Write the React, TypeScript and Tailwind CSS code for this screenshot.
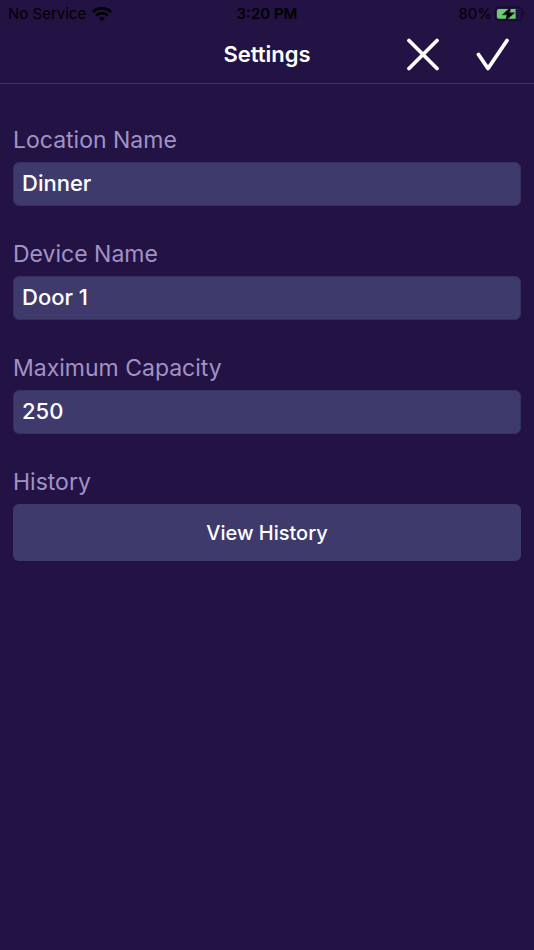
import { useState } from "react";

interface FieldProps {
  id: string;
  label: string;
  defaultValue: string;
  inputMode?: "text" | "numeric";
}

const fields: FieldProps[] = [
  { id: "location-name", label: "Location Name", defaultValue: "Dinner" },
  { id: "device-name", label: "Device Name", defaultValue: "Door 1" },
  { id: "max-capacity", label: "Maximum Capacity", defaultValue: "250", inputMode: "numeric" },
];

function WifiIcon() {
  return (
    <svg viewBox="0 0 20 15" className="h-[15px] w-5" fill="none" stroke="black" aria-hidden="true">
      <path d="M1 4.9C6 0.1 14 0.1 19 4.9" strokeWidth="2.9" />
      <path d="M4.2 8.5C7.4 5.4 12.6 5.4 15.8 8.5" strokeWidth="2.7" />
      <path d="M7 11.3C8.7 9.7 11.3 9.7 13 11.3L10 14.3Z" fill="black" stroke="none" />
    </svg>
  );
}

function BatteryIcon() {
  return (
    <svg viewBox="0 0 32 16" className="h-4 w-8" aria-hidden="true">
      <rect x="1.2" y="1.2" width="27" height="13.2" rx="4" fill="none" stroke="#170b2c" strokeWidth="1.4" />
      <path d="M29.8 5.6C31.9 6.2 31.9 9.4 29.8 10Z" fill="#170b2c" />
      <path d="M4.9 3H21.6V12.8H4.9A2 2 0 0 1 2.9 10.8V5A2 2 0 0 1 4.9 3Z" fill="#69cf6b" />
      <path d="M16.6 1.2L8.4 8.8H13L11.6 14.6L20.6 6.8H15.6Z" fill="black" stroke="#231244" strokeWidth="0.6" />
    </svg>
  );
}

function StatusBar() {
  return (
    <div className="grid h-7 grid-cols-3 items-center px-2 text-[15px] text-black">
      <div className="flex items-center gap-1.5 whitespace-nowrap">
        <span>No Service</span>
        <WifiIcon />
      </div>
      <span className="text-center font-semibold">3:20 PM</span>
      <div className="flex items-center justify-end gap-0.5">
        <span>80%</span>
        <BatteryIcon />
      </div>
    </div>
  );
}

function Header() {
  return (
    <header className="grid h-14 grid-cols-[1fr_auto_1fr] items-center border-b border-[#3a3463] pb-0.5">
      <h1 className="col-start-2 text-[22px] font-semibold text-white">Settings</h1>
      <div className="flex justify-end gap-9 pr-6">
        <button type="button" aria-label="Cancel">
          <svg viewBox="0 0 34 34" className="size-[34px]" fill="none" stroke="white" strokeWidth="3.8" strokeLinecap="round">
            <path d="M3 2.5L31 30.5M31 2.5L3 30.5" />
          </svg>
        </button>
        <button type="button" aria-label="Save">
          <svg viewBox="0 0 34 34" className="size-[34px]" fill="none" stroke="white" strokeWidth="3.8" strokeLinecap="round" strokeLinejoin="round">
            <path d="M2.5 16.5L12 30.5L31 2.5" />
          </svg>
        </button>
      </div>
    </header>
  );
}

function Field({ id, label, defaultValue, inputMode = "text" }: FieldProps) {
  const [value, setValue] = useState(defaultValue);

  return (
    <div className="flex flex-col gap-1.5">
      <label htmlFor={id} className="text-[23px] leading-8 text-[#a093c4]">
        {label}
      </label>
      <input
        id={id}
        value={value}
        inputMode={inputMode}
        onChange={(e) => setValue(e.target.value)}
        className="h-11 w-full rounded-md border border-[#343060] bg-[#3e3b6c] px-2 pb-0.5 text-[22px] font-medium text-white outline-none"
      />
    </div>
  );
}

export default function App() {
  return (
    <div className="min-h-screen bg-[#231244] font-['Inter',sans-serif]">
      <StatusBar />
      <Header />
      <main className="flex flex-col gap-8 px-[13px] py-10">
        {fields.map((field) => (
          <Field key={field.id} {...field} />
        ))}
        <section className="flex flex-col gap-1.5">
          <h2 className="text-[23px] leading-8 text-[#a093c4]">History</h2>
          <button type="button" className="h-[57px] w-full rounded-md bg-[#3e3b6c] text-xl font-medium text-white">
            View History
          </button>
        </section>
      </main>
    </div>
  );
}
